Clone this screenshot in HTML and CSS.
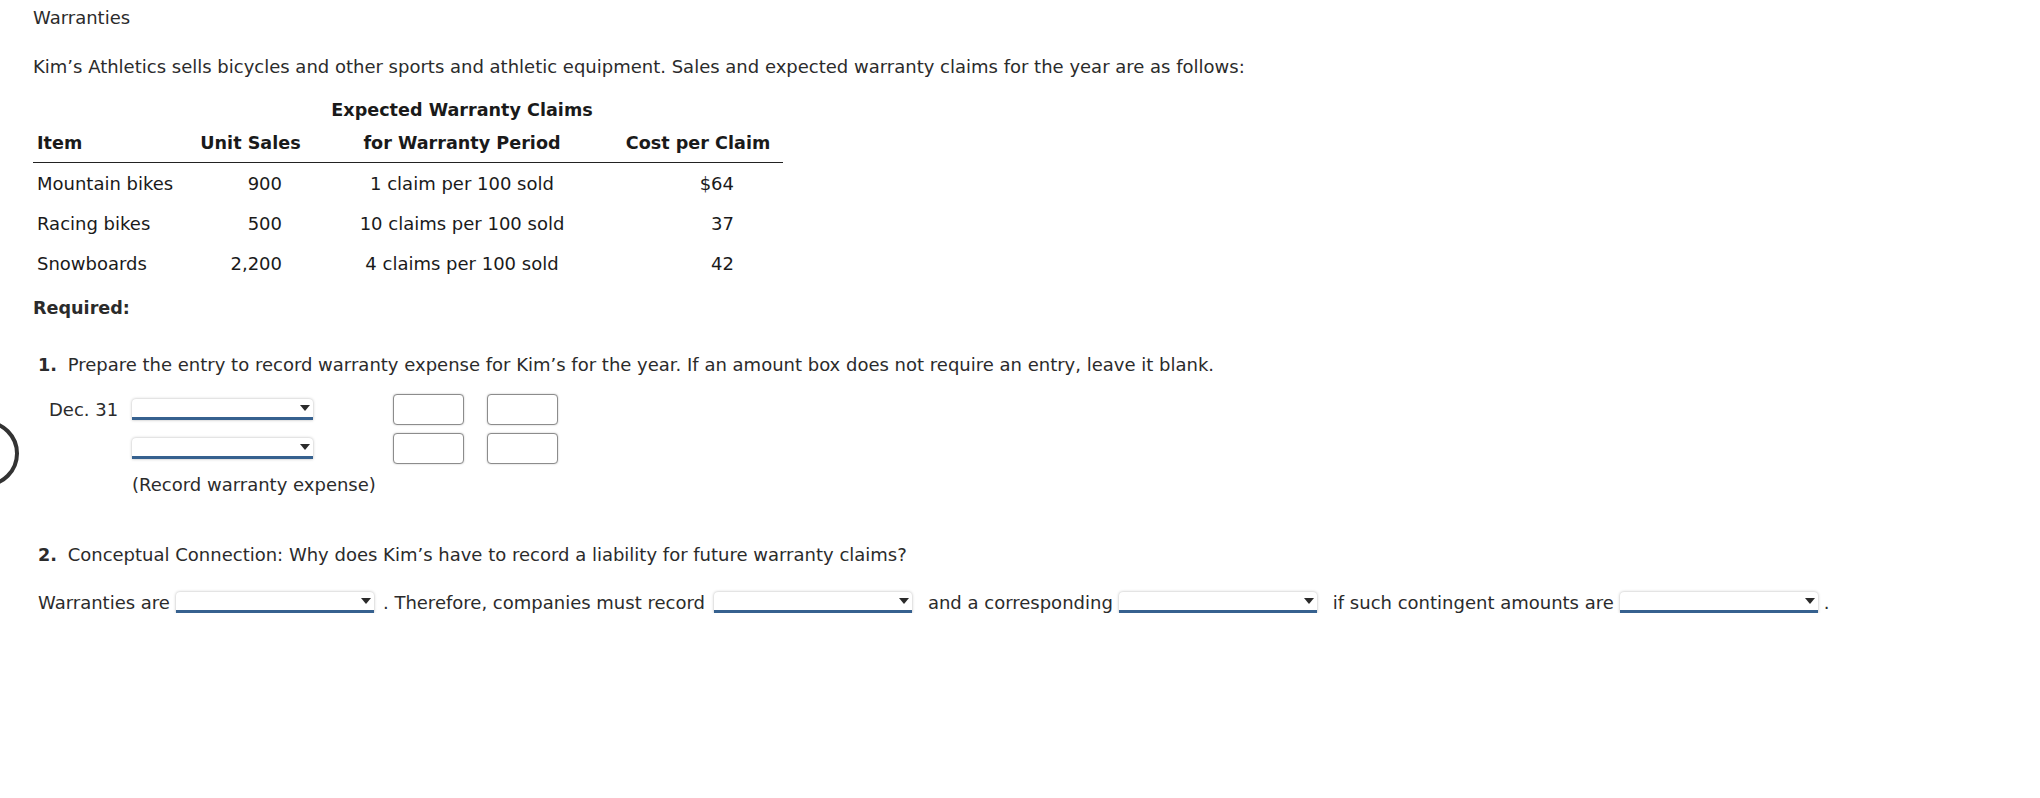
FILE: index.html
```html
<!DOCTYPE html>
<html lang="en">
<head>
<meta charset="utf-8">
<title>Warranties</title>
<link rel="stylesheet" href="styles.css">
</head>
<body>
<div class="page">
  <div class="title">Warranties</div>
  <p class="intro">Kim’s Athletics sells bicycles and other sports and athletic equipment. Sales and expected warranty claims for the year are as follows:</p>

  <table class="data">
    <colgroup>
      <col class="c1"><col class="c2"><col class="c3"><col class="c4">
    </colgroup>
    <thead>
      <tr class="h1">
        <th></th><th></th><th class="ctr">Expected Warranty Claims</th><th></th>
      </tr>
      <tr class="h2">
        <th class="left">Item</th><th class="ctr">Unit Sales</th><th class="ctr">for Warranty Period</th><th class="ctr">Cost per Claim</th>
      </tr>
    </thead>
    <tbody>
      <tr><td class="left">Mountain bikes</td><td class="num n2">900</td><td class="ctr">1 claim per 100 sold</td><td class="num n4">$64</td></tr>
      <tr><td class="left">Racing bikes</td><td class="num n2">500</td><td class="ctr">10 claims per 100 sold</td><td class="num n4">37</td></tr>
      <tr><td class="left">Snowboards</td><td class="num n2">2,200</td><td class="ctr">4 claims per 100 sold</td><td class="num n4">42</td></tr>
    </tbody>
  </table>

  <div class="required">Required:</div>

  <div class="question q1"><b class="qn">1.</b> Prepare the entry to record warranty expense for Kim’s for the year. If an amount box does not require an entry, leave it blank.</div>

  <div class="journal">
    <div class="jrow">
      <div class="date">Dec. 31</div>
      <span class="dd acct"><span class="arrow"></span></span>
      <span class="amt debit"></span>
      <span class="amt credit"></span>
    </div>
    <div class="jrow">
      <div class="date"></div>
      <span class="dd acct"><span class="arrow"></span></span>
      <span class="amt debit"></span>
      <span class="amt credit"></span>
    </div>
  </div>
  <div class="memo">(Record warranty expense)</div>

  <div class="question q2"><b class="qn">2.</b> Conceptual Connection: Why does Kim’s have to record a liability for future warranty claims?</div>

  <div class="fill">
    <span>Warranties are</span>
    <span class="dd wide"><span class="arrow"></span></span>
    <span class="therefore">. Therefore, companies must record</span>
    <span class="dd wide"><span class="arrow"></span></span>
    <span class="after">and a corresponding</span>
    <span class="dd wide"><span class="arrow"></span></span>
    <span class="after">if such contingent amounts are</span>
    <span class="dd wide last"><span class="arrow"></span></span>
    <span>.</span>
  </div>
</div>
<div class="bubble"></div>
</body>
</html>
```
FILE: styles.css
```css
html, body {
  margin: 0;
  padding: 0;
  background: #fff;
}
body {
  font-family: "DejaVu Sans", Verdana, sans-serif;
  font-size: 18px;
  line-height: 21px;
  color: #2b2b2b;
  overflow: hidden;
}
.page {
  padding: 7px 0 0 33px;
}
.title {
  height: 21px;
}
.intro {
  margin: 28px 0 0 0;
}
.data {
  margin-top: 17px;
  border-collapse: collapse;
  table-layout: fixed;
  width: 750px;
  color: #1a1a1a;
}
.c1 { width: 157px; }
.c2 { width: 121px; }
.c3 { width: 302px; }
.c4 { width: 170px; }
.data th {
  font-weight: bold;
  font-size: 17.6px;
  padding: 6px 4px;
  white-space: nowrap;
}
.data .h2 th {
  padding: 6px 4px 8px 4px;
  border-bottom: 1px solid #222;
}
.data td {
  padding: 10px 4px 9px 4px;
  white-space: nowrap;
}
.left { text-align: left; }
.ctr { text-align: center; }
.num { text-align: right; }
.data td.n2 { padding-right: 29px; }
.data td.n4 { padding-right: 49px; }

.required {
  margin-top: 15px;
  font-weight: bold;
  font-size: 17.6px;
}
.question {
  padding-left: 5px;
}
.q1 { margin-top: 35px; }
.qn {
  font-weight: bold;
  font-size: 17.6px;
  margin-right: 5px;
}
.journal {
  margin-top: 17px;
  display: flex;
  flex-direction: column;
  gap: 7px;
}
.jrow {
  display: flex;
  align-items: center;
  height: 32px;
}
.date {
  width: 83px;
  padding-left: 16px;
}
.amt {
  display: block;
  height: 29px;
  width: 69px;
  border: 1px solid #8c8c8c;
  border-radius: 4px;
  box-shadow: 0 0 2px rgba(0, 0, 0, 0.25);
  background: #fff;
}
.debit { margin-left: 80px; }
.credit { margin-left: 23px; }
.dd {
  position: relative;
  display: inline-block;
  flex: none;
  height: 18px;
  background: #fff;
  border-radius: 4px 4px 0 0;
  box-shadow: 0 0 3px rgba(0, 0, 0, 0.3);
  border-bottom: 3px solid #36618f;
  box-sizing: content-box;
}
.acct {
  width: 181px;
}
.wide {
  width: 198px;
}
.arrow {
  position: absolute;
  right: 3px;
  top: 6px;
  width: 0;
  height: 0;
  border-left: 5px solid transparent;
  border-right: 5px solid transparent;
  border-top: 6px solid #2b2b2b;
}
.memo {
  margin-top: 10px;
  padding-left: 99px;
}
.q2 { margin-top: 49px; }
.fill {
  margin-top: 26px;
  padding-left: 5px;
  display: flex;
  align-items: center;
  white-space: nowrap;
}
.fill .dd {
  margin: 0 9px 0 6px;
}
.fill .dd.last {
  margin-right: 6px;
}
.fill .therefore {
  margin-right: 3px;
}
.fill .after {
  margin-left: 7px;
}
.bubble {
  position: absolute;
  left: -48px;
  top: 420px;
  width: 59px;
  height: 59px;
  border: 4px solid #333;
  border-radius: 50%;
}
```
